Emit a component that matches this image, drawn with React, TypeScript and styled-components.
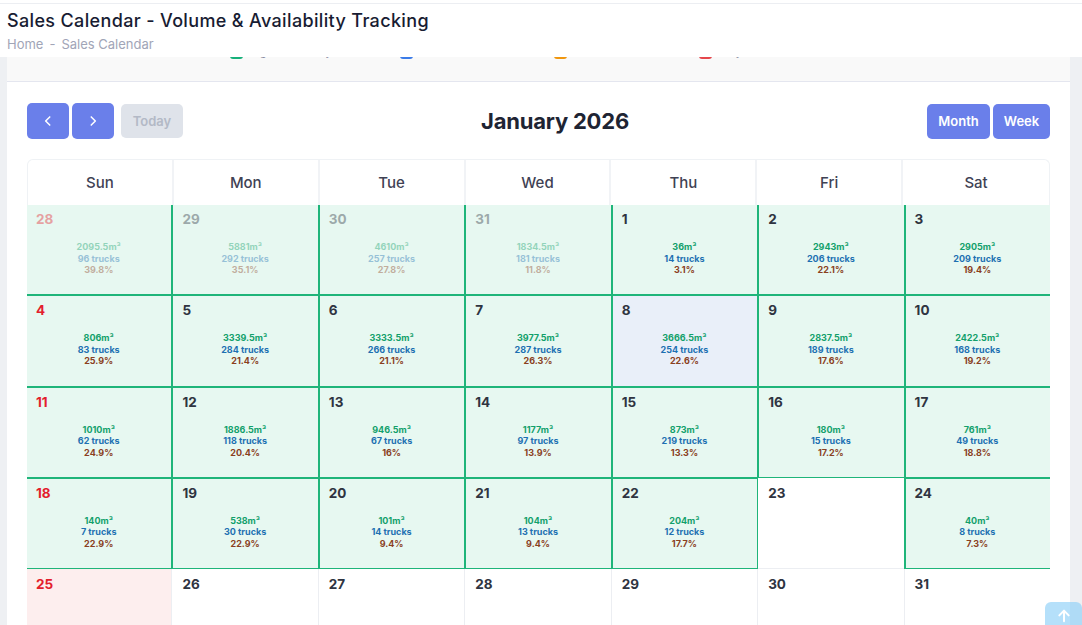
import React from "react";
import styled, { createGlobalStyle, css } from "styled-components";

const GlobalStyle = createGlobalStyle`
  html, body { margin: 0; padding: 0; }
  body {
    background: #eef0f3;
    font-family: Inter, "Open Sans", Arial, sans-serif;
    color: #181c32;
    overflow: hidden;
  }
`;

const Header = styled.header`
  position: fixed;
  top: 0;
  left: 0;
  right: 0;
  height: 57px;
  background: #ffffff;
  z-index: 10;
`;

const HeaderInner = styled.div`
  margin-top: 3px;
  border-top: 1px solid #eceef2;
  padding: 5px 7px 0;
`;

const PageTitle = styled.h1`
  margin: 0;
  font-size: 18px;
  font-weight: 500;
  line-height: 24px;
  color: #181c32;
  letter-spacing: 0.35px;
`;

const Breadcrumb = styled.div`
  margin-top: 3px;
  font-size: 13px;
  line-height: 16px;
  color: #a1a5b7;
  display: flex;
  gap: 6px;
`;

const Main = styled.main`
  padding: 33px 12px 0 7px;
`;

const Card = styled.section`
  background: #ffffff;
`;

const LegendBar = styled.div`
  box-sizing: border-box;
  height: 49px;
  background: #f9f9f9;
  border-bottom: 1px solid #e4e6ef;
  display: flex;
  align-items: flex-start;
  padding: 13px 0 0 223px;
`;

const LegendItem = styled.div<{ $w: number }>`
  width: ${(p) => p.$w}px;
  display: flex;
  align-items: flex-start;
  gap: 6px;
  font-size: 11px;
  line-height: 12px;
  color: #7e8299;
  white-space: nowrap;
`;

const Swatch = styled.span<{ $c: string }>`
  width: 13px;
  height: 13px;
  border-radius: 3px;
  background: ${(p) => p.$c};
  flex: none;
`;

const CardBody = styled.div`
  padding: 21px 20px 0;
`;

const Toolbar = styled.div`
  display: flex;
  align-items: center;
  justify-content: space-between;
  height: 36px;
`;

const BtnGroup = styled.div`
  display: flex;
  align-items: center;
  gap: 3px;
`;

const NavBtn = styled.button`
  width: 42px;
  height: 36px;
  border: none;
  border-radius: 5px;
  background: #6a7fea;
  color: #fff;
  display: flex;
  align-items: center;
  justify-content: center;
  padding: 0;
`;

const TodayBtn = styled.button`
  margin-left: 4px;
  width: 62px;
  height: 34px;
  border: none;
  border-radius: 5px;
  background: #dfe3ea;
  color: #b3b9c6;
  font-family: inherit;
  font-size: 13px;
  font-weight: 600;
`;

const ViewBtn = styled.button<{ $w: number }>`
  width: ${(p) => p.$w}px;
  height: 35px;
  border: none;
  border-radius: 5px;
  background: #6a7fea;
  color: #fff;
  font-family: inherit;
  font-size: 13px;
  font-weight: 600;
`;

const MonthTitle = styled.h2`
  margin: 0;
  font-size: 22px;
  font-weight: 700;
  color: #1e2433;
  letter-spacing: -0.2px;
`;

const Calendar = styled.div`
  margin-top: 20px;
`;

const HeadRow = styled.div`
  display: grid;
  grid-template-columns: repeat(7, 1fr);
  border: 1px solid #eff2f5;
  border-bottom: none;
  border-radius: 6px 6px 0 0;
  height: 46px;
  box-sizing: border-box;
`;

const HeadCell = styled.div`
  display: flex;
  align-items: center;
  justify-content: center;
  font-size: 15px;
  font-weight: 500;
  color: #3f4254;
  border-right: 2px solid #f1f3f6;
  &:last-child { border-right: none; }
`;

const BodyClip = styled.div`
  overflow: hidden;
  height: 430px;
`;

const Grid = styled.div`
  display: grid;
  grid-template-columns: repeat(7, 1fr);
  grid-auto-rows: 91.3px;
  margin: -1px -1px 0;
`;

const Cell = styled.div<{ $bg: string; $green: boolean }>`
  box-sizing: border-box;
  padding: 6px 10px 0;
  background: ${(p) => p.$bg};
  border-right: 1px solid #eceef2;
  border-bottom: 1px solid #eceef2;
  ${(p) =>
    p.$green &&
    css`
      outline: 2px solid #1fb57a;
      outline-offset: -1px;
    `}
`;

const CellContent = styled.div<{ $faded: boolean }>`
  opacity: ${(p) => (p.$faded ? 0.4 : 1)};
`;

const DayNum = styled.div<{ $red: boolean }>`
  font-size: 13.5px;
  font-weight: 700;
  line-height: 18px;
  color: ${(p) => (p.$red ? "#e3202c" : "#2f3441")};
`;

const Stats = styled.div`
  margin-top: 13px;
  display: flex;
  flex-direction: column;
  align-items: center;
  font-size: 9px;
  font-weight: 700;
  line-height: 11.5px;
`;

const Stat = styled.span<{ $c: string }>`
  color: ${(p) => p.$c};
`;

const ScrollTop = styled.button`
  position: fixed;
  right: 0;
  bottom: -13px;
  width: 37px;
  height: 36px;
  border: none;
  border-radius: 6px;
  background: rgba(142, 207, 247, 0.65);
  display: flex;
  justify-content: center;
  padding: 6px 0 0;
  z-index: 5;
`;

type Day = {
  n: number;
  vol?: string;
  trucks?: number;
  pct?: string;
  other?: boolean;
  today?: boolean;
};

const days: Day[] = [
  { n: 28, vol: "2095.5", trucks: 96, pct: "39.8%", other: true },
  { n: 29, vol: "5881", trucks: 292, pct: "35.1%", other: true },
  { n: 30, vol: "4610", trucks: 257, pct: "27.8%", other: true },
  { n: 31, vol: "1834.5", trucks: 181, pct: "11.8%", other: true },
  { n: 1, vol: "36", trucks: 14, pct: "3.1%" },
  { n: 2, vol: "2943", trucks: 206, pct: "22.1%" },
  { n: 3, vol: "2905", trucks: 209, pct: "19.4%" },
  { n: 4, vol: "806", trucks: 83, pct: "25.9%" },
  { n: 5, vol: "3339.5", trucks: 284, pct: "21.4%" },
  { n: 6, vol: "3333.5", trucks: 266, pct: "21.1%" },
  { n: 7, vol: "3977.5", trucks: 287, pct: "26.3%" },
  { n: 8, vol: "3666.5", trucks: 254, pct: "22.6%", today: true },
  { n: 9, vol: "2837.5", trucks: 189, pct: "17.6%" },
  { n: 10, vol: "2422.5", trucks: 168, pct: "19.2%" },
  { n: 11, vol: "1010", trucks: 62, pct: "24.9%" },
  { n: 12, vol: "1886.5", trucks: 118, pct: "20.4%" },
  { n: 13, vol: "946.5", trucks: 67, pct: "16%" },
  { n: 14, vol: "1177", trucks: 97, pct: "13.9%" },
  { n: 15, vol: "873", trucks: 219, pct: "13.3%" },
  { n: 16, vol: "180", trucks: 15, pct: "17.2%" },
  { n: 17, vol: "761", trucks: 49, pct: "18.8%" },
  { n: 18, vol: "140", trucks: 7, pct: "22.9%" },
  { n: 19, vol: "538", trucks: 30, pct: "22.9%" },
  { n: 20, vol: "101", trucks: 14, pct: "9.4%" },
  { n: 21, vol: "104", trucks: 13, pct: "9.4%" },
  { n: 22, vol: "204", trucks: 12, pct: "17.7%" },
  { n: 23 },
  { n: 24, vol: "40", trucks: 8, pct: "7.3%" },
  { n: 25 },
  { n: 26 },
  { n: 27 },
  { n: 28 },
  { n: 29 },
  { n: 30 },
  { n: 31 },
];

const weekdays = ["Sun", "Mon", "Tue", "Wed", "Thu", "Fri", "Sat"];

const Chevron = ({ dir }: { dir: "left" | "right" }) => (
  <svg width="14" height="14" viewBox="0 0 24 24" fill="none" stroke="#fff" strokeWidth="2.6" strokeLinecap="round" strokeLinejoin="round">
    {dir === "left" ? <path d="M15 5l-7 7 7 7" /> : <path d="M9 5l7 7-7 7" />}
  </svg>
);

export default function App() {
  return (
    <>
      <GlobalStyle />
      <Header>
        <HeaderInner>
          <PageTitle>Sales Calendar - Volume &amp; Availability Tracking</PageTitle>
          <Breadcrumb>
            <span>Home</span>
            <span>-</span>
            <span>Sales Calendar</span>
          </Breadcrumb>
        </HeaderInner>
      </Header>
      <Main>
        <Card>
          <LegendBar>
            <LegendItem $w={170}>
              <Swatch $c="#17b07a" />
              <span>High Availability (&gt;50%)</span>
            </LegendItem>
            <LegendItem $w={154}>
              <Swatch $c="#3b7be8" />
              <span>Medium (30-50%)</span>
            </LegendItem>
            <LegendItem $w={145}>
              <Swatch $c="#f0960e" />
              <span>Low (10-30%)</span>
            </LegendItem>
            <LegendItem $w={160}>
              <Swatch $c="#e5464c" />
              <span>Very Low (&lt;10%)</span>
            </LegendItem>
          </LegendBar>
          <CardBody>
            <Toolbar>
              <BtnGroup>
                <NavBtn aria-label="previous">
                  <Chevron dir="left" />
                </NavBtn>
                <NavBtn aria-label="next">
                  <Chevron dir="right" />
                </NavBtn>
                <TodayBtn>Today</TodayBtn>
              </BtnGroup>
              <MonthTitle>January 2026</MonthTitle>
              <BtnGroup>
                <ViewBtn $w={63}>Month</ViewBtn>
                <ViewBtn $w={57}>Week</ViewBtn>
              </BtnGroup>
            </Toolbar>
            <Calendar>
              <HeadRow>
                {weekdays.map((d) => (
                  <HeadCell key={d}>{d}</HeadCell>
                ))}
              </HeadRow>
              <BodyClip>
                <Grid>
                  {days.map((d, i) => {
                    const sunday = i % 7 === 0;
                    const hasData = !!d.vol;
                    const bg = d.today
                      ? "#e9eff9"
                      : hasData
                      ? "#e7f8f1"
                      : sunday
                      ? "#fdeeee"
                      : "#ffffff";
                    return (
                      <Cell key={i} $bg={bg} $green={hasData}>
                        <CellContent $faded={!!d.other}>
                          <DayNum $red={sunday}>{d.n}</DayNum>
                          {hasData && (
                            <Stats>
                              <Stat $c="#12a06b">{d.vol}m³</Stat>
                              <Stat $c="#1d70b2">{d.trucks} trucks</Stat>
                              <Stat $c="#8a3f1e">{d.pct}</Stat>
                            </Stats>
                          )}
                        </CellContent>
                      </Cell>
                    );
                  })}
                </Grid>
              </BodyClip>
            </Calendar>
          </CardBody>
        </Card>
      </Main>
      <ScrollTop aria-label="scroll to top">
        <svg width="16" height="16" viewBox="0 0 24 24" fill="none" stroke="#fff" strokeWidth="3" strokeLinecap="round" strokeLinejoin="round">
          <path d="M12 20V5" />
          <path d="M5 11l7-7 7 7" />
        </svg>
      </ScrollTop>
    </>
  );
}
